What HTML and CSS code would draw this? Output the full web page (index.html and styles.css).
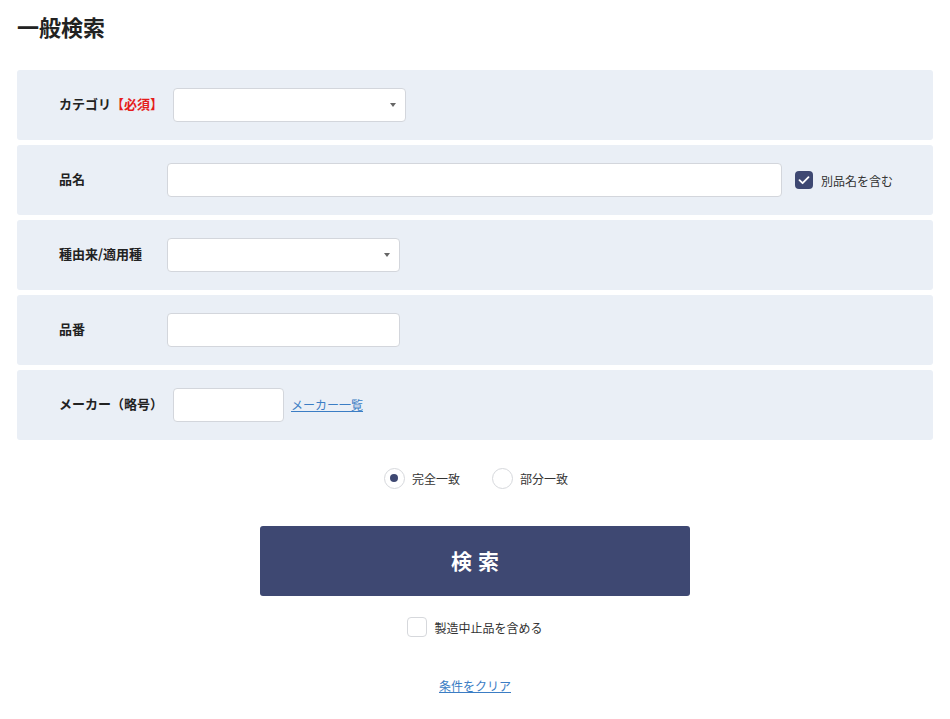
FILE: index.html
```html
<!DOCTYPE html>
<html lang="ja">
<head>
    <meta charset="UTF-8">
    <meta name="viewport" content="width=device-width, initial-scale=1.0">
    <title>一般検索</title>
    <link rel="stylesheet" href="styles.css">
</head>
<body>
    <div class="container">
        <h1 class="title">一般検索</h1>

        <div class="form-rows">
            <div class="row">
                <label class="row-label">カテゴリ<span class="required">【必須】</span></label>
                <div class="select select-category"><span class="arrow"></span></div>
            </div>
            <div class="row">
                <label class="row-label">品名</label>
                <input type="text" class="field field-name">
                <label class="check check-alias">
                    <span class="box checked">
                        <svg viewBox="0 0 18 18" width="18" height="18"><path d="M4.5 9.2 L7.6 12.2 L13.5 6.2" fill="none" stroke="#fff" stroke-width="1.8" stroke-linecap="round" stroke-linejoin="round"/></svg>
                    </span>
                    別品名を含む
                </label>
            </div>
            <div class="row">
                <label class="row-label">種由来/適用種</label>
                <div class="select select-origin"><span class="arrow"></span></div>
            </div>
            <div class="row">
                <label class="row-label">品番</label>
                <input type="text" class="field field-number">
            </div>
            <div class="row">
                <label class="row-label">メーカー（略号）</label>
                <input type="text" class="field field-maker">
                <a href="#" class="link maker-link">メーカー一覧</a>
            </div>
        </div>

        <div class="match-options">
            <label class="radio"><span class="circle on"></span>完全一致</label>
            <label class="radio"><span class="circle"></span>部分一致</label>
        </div>

        <div class="actions">
            <button class="search-btn">検索</button>
            <label class="check check-discontinued"><span class="box"></span>製造中止品を含める</label>
            <a href="#" class="link clear-link">条件をクリア</a>
        </div>
    </div>
</body>
</html>
```

FILE: styles.css
```css
body {
    font-family: "Noto Sans CJK JP", "Noto Sans", sans-serif;
    margin: 0;
    padding: 0;
    background: #fff;
    color: #333;
}

.container {
    padding: 0 17px;
}

.title {
    font-size: 22px;
    font-weight: bold;
    color: #222;
    margin: 0;
    padding-top: 11px;
    line-height: 30px;
    height: 59px;
}

.form-rows {
    display: flex;
    flex-direction: column;
    gap: 5px;
}

.row {
    display: flex;
    align-items: center;
    height: 70px;
    padding-left: 42px;
    background: #eaeff6;
    border-radius: 3px;
}

.row-label {
    min-width: 100px;
    margin-right: 8px;
    margin-bottom: 3px;
    font-size: 13px;
    font-weight: bold;
    color: #222;
    white-space: nowrap;
}

.required {
    color: #e51c1c;
}

.field,
.select {
    box-sizing: border-box;
    height: 34px;
    background: #fff;
    border: 1px solid #d3d6dc;
    border-radius: 4px;
}

.field {
    padding: 0 8px;
    font-size: 13px;
}

.select {
    position: relative;
}

.arrow {
    position: absolute;
    right: 9px;
    top: 14px;
    width: 0;
    height: 0;
    border-left: 3.5px solid transparent;
    border-right: 3.5px solid transparent;
    border-top: 4px solid #666;
}

.select-category {
    width: 233px;
    margin-left: 2px;
}

.select-origin,
.field-number {
    width: 233px;
}

.field-name {
    width: 615px;
}

.field-maker {
    width: 111px;
    margin-left: 2px;
}

.check {
    display: flex;
    align-items: center;
    font-size: 12px;
    color: #333;
}

.check-alias {
    margin-left: 13px;
    gap: 8px;
}

.box {
    box-sizing: border-box;
    width: 20px;
    height: 20px;
    border: 1px solid #d6d8dc;
    border-radius: 4px;
    background: #fff;
}

.box.checked {
    width: 18px;
    height: 18px;
    border: none;
    background: #3e4872;
    display: flex;
    align-items: center;
    justify-content: center;
}

.link {
    color: #3b7dc4;
    font-size: 12px;
    text-decoration: underline;
}

.maker-link {
    margin-left: 7px;
    margin-bottom: 2px;
}

.match-options {
    display: flex;
    justify-content: center;
    gap: 32px;
    margin-top: 28px;
    height: 20px;
    padding-left: 2px;
}

.radio {
    display: flex;
    align-items: center;
    gap: 7px;
    font-size: 12px;
    color: #333;
}

.circle {
    box-sizing: border-box;
    width: 21px;
    height: 21px;
    border: 1px solid #d6d8dc;
    border-radius: 50%;
    background: #fff;
    display: flex;
    align-items: center;
    justify-content: center;
}

.circle.on::after {
    content: "";
    width: 8px;
    height: 8px;
    border-radius: 50%;
    background: #3e4872;
}

.actions {
    display: flex;
    flex-direction: column;
    align-items: center;
    margin-top: 38px;
}

.search-btn {
    width: 430px;
    height: 70px;
    background: #3e4872;
    color: #fff;
    border: none;
    border-radius: 3px;
    font-family: inherit;
    font-size: 21px;
    font-weight: bold;
    letter-spacing: 6px;
    padding: 0 0 3px 6px;
    cursor: pointer;
}

.check-discontinued {
    margin-top: 21px;
    gap: 7px;
}

.clear-link {
    margin-top: 40px;
}
```
